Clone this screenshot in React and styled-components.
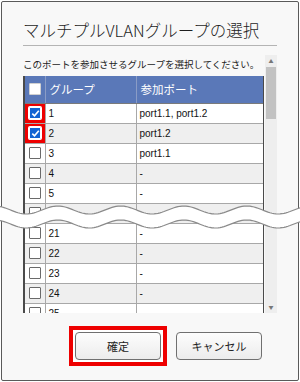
import React from 'react'
import styled, { createGlobalStyle } from 'styled-components'

const GlobalStyle = createGlobalStyle`
  html, body {
    margin: 0;
    padding: 0;
    background: #ffffff;
  }
  * {
    box-sizing: border-box;
  }
`

const rows = [
  { n: 1, ports: 'port1.1, port1.2', checked: true },
  { n: 2, ports: 'port1.2', checked: true },
  { n: 3, ports: 'port1.1' },
  { n: 4, ports: '-' },
  { n: 5, ports: '-' },
  { n: 6, ports: '-' },
  { n: 21, ports: '-' },
  { n: 22, ports: '-' },
  { n: 23, ports: '-' },
  { n: 24, ports: '-' },
  { n: 25, ports: '-' },
]

const Check = ({ checked, header }) => (
  <Box $checked={checked} $header={header}>
    {checked && (
      <svg width="9" height="9" viewBox="0 0 9 9">
        <path d="M1.3 4.6 L3.5 6.8 L7.8 1.8" fill="none" stroke="#fff" strokeWidth="1.6" />
      </svg>
    )}
  </Box>
)

const Wave = () => {
  const pts = (base) => {
    let d = ''
    for (let x = 0; x <= 300; x += 2) {
      const y = base - 4 * Math.sin(((x - 42) / 63) * Math.PI * 2)
      d += (x === 0 ? 'M' : 'L') + x + ' ' + y.toFixed(2) + ' '
    }
    return d
  }
  const top = pts(9)
  const bottom = pts(23)
  let fill = top
  for (let x = 300; x >= 0; x -= 2) {
    const y = 23 - 4 * Math.sin(((x - 42) / 63) * Math.PI * 2)
    fill += 'L' + x + ' ' + y.toFixed(2) + ' '
  }
  return (
    <WaveLayer width="300" height="32" viewBox="0 0 300 32">
      <path d={fill + 'Z'} fill="#ffffff" />
      <path d={top} fill="none" stroke="#8a8a8a" strokeWidth="1.2" />
      <path d={bottom} fill="none" stroke="#8a8a8a" strokeWidth="1.2" />
    </WaveLayer>
  )
}

const App = () => {
  return (
    <>
      <GlobalStyle />
      <Dialog>
        <Title>マルチプルVLANグループの選択</Title>
        <Body>
          <Scroller>
            <Lead>このポートを参加させるグループを選択してください。</Lead>
            <Table>
              <colgroup>
                <col style={{ width: 21 }} />
                <col style={{ width: 91 }} />
                <col />
              </colgroup>
              <thead>
                <tr>
                  <HeadCell><Check header /></HeadCell>
                  <HeadCell>グループ</HeadCell>
                  <HeadCell>参加ポート</HeadCell>
                </tr>
              </thead>
              <tbody>
                {rows.map((r, i) => (
                  <Row key={r.n} $even={i % 2 === 1}>
                    <CheckCell $marked={r.checked}><Check checked={r.checked} /></CheckCell>
                    <Cell>{r.n}</Cell>
                    <Cell>{r.ports}</Cell>
                  </Row>
                ))}
              </tbody>
            </Table>
          </Scroller>
          <ScrollBar>
            <Arrow>▲</Arrow>
            <Track>
              <Thumb />
            </Track>
            <Arrow>▼</Arrow>
          </ScrollBar>
        </Body>
        <Footer>
          <Marker>
            <Button>確定</Button>
          </Marker>
          <Button>キャンセル</Button>
        </Footer>
        <Wave />
      </Dialog>
    </>
  )
}

const Dialog = styled.div`
  position: relative;
  margin: 1px;
  width: 298px;
  height: 380px;
  border: 1px solid #5a5a5a;
  border-radius: 2px;
  background: #f8f8f8;
  padding: 0 21px;
  display: flex;
  flex-direction: column;
  font-family: "Noto Sans CJK JP", "Noto Sans", sans-serif;
  color: #222;
`

const Title = styled.h1`
  margin: 0;
  padding: 16px 0 3px;
  font-size: 16.5px;
  line-height: 24px;
  font-weight: 300;
  letter-spacing: 0;
  color: #1e1e1e;
  border-bottom: 1px solid #b4b4b4;
  white-space: nowrap;
`

const Body = styled.div`
  margin-top: 9px;
  height: 258px;
  display: flex;
`

const Scroller = styled.div`
  width: 242px;
  overflow: hidden;
`

const Lead = styled.div`
  height: 21px;
  font-size: 9.5px;
  line-height: 16px;
  padding-top: 1px;
  color: #222;
  white-space: nowrap;
`

const Table = styled.table`
  width: 242px;
  table-layout: fixed;
  border-collapse: collapse;
  border-left: 2px solid #4a4a4a;
  border-right: 2px solid #4a4a4a;
  font-family: "Noto Sans CJK JP", "Noto Sans", sans-serif;
`

const HeadCell = styled.th`
  height: 27px;
  padding: 0 0 0 4px;
  background: #5a78b8;
  color: #ffffff;
  font-size: 11.5px;
  font-weight: 400;
  text-align: left;
  border-right: 1px solid #8a9cc6;
  border-bottom: 1px solid #7a7a7a;

  &:first-child {
    padding-left: 4px;
  }
`

const Row = styled.tr`
  background: ${p => (p.$even ? '#efefef' : '#ffffff')};
`

const Cell = styled.td`
  height: 20px;
  padding: 0 0 0 3px;
  font-family: "Liberation Sans", Arial, sans-serif;
  font-size: 10px;
  color: #111;
  border-right: 1px solid #a8a8a8;
  border-bottom: 1px solid #a8a8a8;
  white-space: nowrap;
`

const CheckCell = styled(Cell)`
  padding: 0 0 0 4px;
  background: ${p => (p.$marked ? '#ee0000' : 'transparent')};
`

const Box = styled.span`
  display: flex;
  align-items: center;
  justify-content: center;
  width: 12px;
  height: 12px;
  border-radius: 1px;
  border: 1px solid ${p => (p.$checked ? '#ffffff' : p.$header ? '#d0d0d0' : '#6a6a6a')};
  background: ${p => (p.$checked ? '#1464d2' : '#ffffff')};
  box-shadow: ${p => (p.$checked ? '0 0 0 1px #ffffff' : 'none')};
`

const ScrollBar = styled.div`
  width: 12px;
  margin-left: 1px;
  display: flex;
  flex-direction: column;
  background: #eeeeee;
`

const Arrow = styled.div`
  height: 12px;
  font-size: 5px;
  line-height: 12px;
  text-align: center;
  color: #777;
`

const Track = styled.div`
  flex: 1;
  padding: 0 1px;
`

const Thumb = styled.div`
  height: 52px;
  background: #c2c2c2;
`

const Footer = styled.div`
  margin-top: 13px;
  padding-left: 46px;
  display: flex;
  align-items: center;
  gap: 9px;
`

const Marker = styled.div`
  padding: 2px;
  border: 4px solid #ee0000;
  background: #ffffff;
`

const Button = styled.button`
  width: 86px;
  height: 28px;
  border: 1px solid #707070;
  border-radius: 4px;
  background: linear-gradient(#fdfdfd, #ececec);
  font-family: "Noto Sans CJK JP", "Noto Sans", sans-serif;
  font-size: 11px;
  color: #222;
  padding: 0;
`

const WaveLayer = styled.svg`
  position: absolute;
  left: -2px;
  top: 199px;
  display: block;
`

export default App
